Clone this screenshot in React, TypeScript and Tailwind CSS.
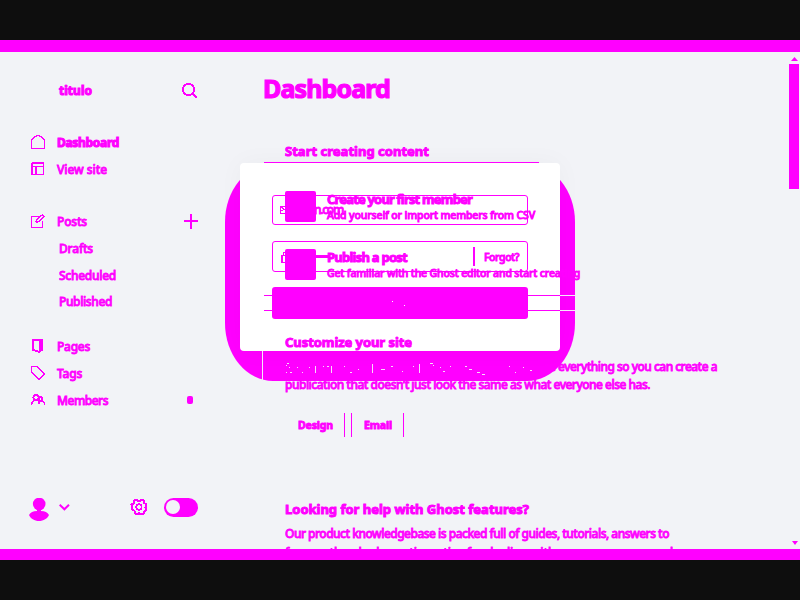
import { useLayoutEffect, useRef, useState } from "react";
import type { ReactNode } from "react";

// A single line of text whose tracking is tuned to fill a given width.
function Line({ children, w, className = "" }: { children: string; w: number; className?: string }) {
  const ref = useRef<HTMLSpanElement>(null);
  const [tracking, setTracking] = useState(0);
  useLayoutEffect(() => {
    if (ref.current) {
      const natural = ref.current.getBoundingClientRect().width - tracking * children.length;
      setTracking((w - natural) / children.length);
    }
  }, [children, w]);
  return (
    <span ref={ref} className={`block w-fit shrink-0 whitespace-pre ${className}`} style={{ letterSpacing: `${tracking}px` }}>
      {children}
    </span>
  );
}

const body = "text-[12px] leading-[18px] font-medium [-webkit-text-stroke:0.8px_#f0f]";
const bodyBold = "text-[12px] leading-[18px] font-bold [-webkit-text-stroke:1.1px_#f0f]";
const small = "text-[10.5px] leading-[14px] font-medium [-webkit-text-stroke:0.9px_#f0f]";
const smallBold = "text-[10.5px] leading-[14px] font-bold [-webkit-text-stroke:0.9px_#f0f]";
const heading = "text-[13px] leading-[18px] font-bold [-webkit-text-stroke:1px_#f0f]";

function Icon({ children }: { children: ReactNode }) {
  return (
    <svg className="mb-[2px] h-[14px] w-[14px] shrink-0" viewBox="0 0 14 14" fill="none" stroke="currentColor" strokeWidth="1.3" shapeRendering="crispEdges">
      {children}
    </svg>
  );
}

function Row({ icon, label, w, bold = false, end }: { icon: ReactNode; label: string; w: number; bold?: boolean; end?: ReactNode }) {
  return (
    <div className="flex h-[27px] items-center pl-[31px]">
      <Icon>{icon}</Icon>
      <div className="ml-[12px] flex flex-1">
        <Line w={w} className={bold ? bodyBold : body}>{label}</Line>
      </div>
      {end}
    </div>
  );
}

function Sub({ label, w }: { label: string; w: number }) {
  return (
    <div className="flex h-[26.7px] items-center pt-px pl-[59px]">
      <Line w={w} className={body}>{label}</Line>
    </div>
  );
}

function Sidebar() {
  return (
    <aside className="flex w-[262px] shrink-0 flex-col">
      <div className="mt-[27px] flex h-[24px] items-center pl-[59px]">
        <Line w={33} className={bodyBold}>titulo</Line>
        <svg className="ml-[90px] h-[17px] w-[17px]" viewBox="0 0 17 17" fill="none" stroke="currentColor" strokeWidth="2" shapeRendering="crispEdges">
          <circle cx="6.500" cy="6.500" r="5.700" />
          <path d="m10.500 10.500 4.500 4.500" />
        </svg>
      </div>
      <nav className="mt-[26px] flex flex-col">
        <Row icon={<path d="M.5 13.500V5L4 1.600 7 .5l3 1.100L13.500 5v8.500z" />} label="Dashboard" w={62} bold />
        <Row icon={<><rect x="1" y="1" width="11.500" height="11.500" rx="1" strokeWidth="1.800" /><path d="M1 4.500h12M5 4.500V13" strokeWidth="1.800" /></>} label="View site" w={50} />
        <div className="h-[25px]" />
        <Row
          icon={<path d="M8 2.500H.8v10.700h10.400V7M5 8l1-2.500L11.500.6l1.700 1.700L7.700 7.700 5 8.500" />}
          label="Posts"
          w={30}
          end={
            <svg className="mr-[63px] h-[15px] w-[15px]" viewBox="0 0 15 15" fill="currentColor" shapeRendering="crispEdges">
              <path d="M6 0h2v15H6z" />
              <path d="M0 6h14v2H0z" />
            </svg>
          }
        />
        <Sub label="Drafts" w={34} />
        <Sub label="Scheduled" w={57} />
        <Sub label="Published" w={53} />
        <div className="h-[18px]" />
        <Row
          icon={<path d="M2 1h9v10L8 13 6 12 2 11z M8.500 1v11M10.200 1v11" strokeWidth="1.900" />}
          label="Pages"
          w={33}
        />
        <Row icon={<path d="M.7.7h5.800l7 7-5.400 5.500-7.400-7z" />} label="Tags" w={25} />
        <Row
          icon={<><circle cx="5" cy="4.500" r="2.600" strokeWidth="1.900" /><circle cx="9.500" cy="6" r="2" strokeWidth="1.700" /><path d="M.6 12c0-3 2-4.800 4.400-4.800S8 9 8 10M7.500 11c.8-3 2-3 3-3 2 0 3 2 3 4" strokeWidth="1.500" /></>}
          label="Members"
          w={51}
          end={<span className="mr-[69px] mb-[2px] h-[8px] w-[6px] rounded-[2px] bg-[#f0f]" />}
        />
      </nav>
      <div className="mt-[81px] flex h-[26px] items-center pl-[29px]">
        <svg className="mt-[3px] h-[24px] w-[20px]" viewBox="0 0 20 24" fill="currentColor">
          <ellipse cx="10.200" cy="6" rx="6.300" ry="6.300" />
          <path d="M8 12h4v1c4 0 6.500 1.500 8 4-1.500 3.500-5.500 6-10 6s-8.500-2.500-10-6c1.500-2.500 4-4 8-4z" />
        </svg>
        <svg className="mb-px ml-[10px] h-[7px] w-[11px]" viewBox="0 0 11 7" fill="none" stroke="currentColor" strokeWidth="2">
          <path d="m.7.8 4.700 4.500L10 .8" />
        </svg>
        <svg className="mb-[2px] ml-[60px] h-[18px] w-[18px]" viewBox="0 0 18 18" fill="none" stroke="currentColor" strokeWidth="2" shapeRendering="crispEdges">
          <path d="M6 1.500 8 3l2-.2L12 1.500l2 1.200.2 2.300 2 1.500V9l-.8.500.8 3-2.200 1-.5 2.200-2.500.8-1.800-1.500L7 16.200l-2.300-1.200-.2-2.200-2.500-1.300L2.500 9 1.500 6.500l2.500-1L4.200 3z" />
          <circle cx="8.900" cy="9" r="2.800" strokeWidth="1.700" />
        </svg>
        <div className="mb-[2px] ml-[16px] flex h-[19px] w-[34px] items-center rounded-full bg-[#f0f] pl-[2px]">
          <div className="h-[14px] w-[14px] rounded-full bg-[#f3f4f8]" />
        </div>
      </div>
    </aside>
  );
}

function Step({ title, tw, text, w }: { title: string; tw: number; text: string; w: number }) {
  return (
    <div className="flex h-[58px] shrink-0 items-start gap-[11px] pl-[23px]">
      <div className="h-[31px] w-[31px] shrink-0 rounded-[2px] bg-[#f0f]" />
      <div className="-mt-[1px] flex flex-col">
        <Line w={tw} className={heading}>{title}</Line>
        <Line w={w} className={small}>{text}</Line>
      </div>
    </div>
  );
}

function Main() {
  return (
    <main className="flex h-[497px] min-w-0 flex-1 flex-col">
      <Line w={127} className="mt-[18px] ml-px text-[25px] font-bold leading-[36px] [-webkit-text-stroke:1.2px_#f0f]">Dashboard</Line>
      <Line w={144} className={`${heading} mt-[36px] ml-[23px]`}>Start creating content</Line>
      <div className="mt-[2px] ml-[2px] h-px w-[275px] shrink-0 bg-[#f0f]" />
      <div className="mt-[28px] flex h-[104px] shrink-0 flex-col">
        <Step title="Create your first member" tw={145} text="Add yourself or import members from CSV" w={208} />
        <Step title="Publish a post" tw={80} text="Get familiar with the Ghost editor and start creating" w={253} />
      </div>
      {/* Divider pair below the step list */}
      <div className="ml-[2px] flex h-[16px] w-[311px] shrink-0 flex-col justify-between">
        <div className="flex h-px"><i className="w-[296px] bg-[#f0f]" /><i className="flex-1 bg-[#f5e8fa]" /></div>
        <div className="flex h-px"><i className="w-[296px] bg-[#f0f]" /><i className="flex-1 bg-[#f5e8fa]" /></div>
      </div>
      <Line w={127} className={`${heading} mt-[22px] ml-[23px]`}>Customize your site</Line>
      <div className="mt-[7px] ml-[23px] flex shrink-0 flex-col">
        <Line w={432} className={body}>Stand out from the crowd. Ghost lets you customize everything so you can create a</Line>
        <Line w={365} className={body}>publication that doesn’t just look the same as what everyone else has.</Line>
      </div>
      <div className="mt-[19px] ml-[23px] flex h-[24px] shrink-0 gap-[6px]">
        <div className="flex w-[60px] items-center border-r border-[#f0f] pl-[13px]">
          <Line w={35} className={smallBold}>Design</Line>
        </div>
        <div className="flex w-[53px] items-center border-x border-[#f0f] pl-[12px]">
          <Line w={28} className={smallBold}>Email</Line>
        </div>
      </div>
      <Line w={244} className={`${heading} mt-[63px] ml-[23px]`}>Looking for help with Ghost features?</Line>
      <div className="mt-[7px] ml-[23px] flex shrink-0 flex-col gap-px">
        <Line w={384} className={body}>Our product knowledgebase is packed full of guides, tutorials, answers to</Line>
        <Line w={388} className={body}>frequently asked questions, tips for dealing with common errors, and</Line>
      </div>
    </main>
  );
}

// Sign-in dialog floating beneath the dashboard lettering, with its heavy drop shadow.
function Dialog() {
  return (
    <>
      <div className="absolute top-[112px] left-[225px] h-[217px] w-[350px] rounded-[48px/58px] bg-[#f0f]" />
      <div className="absolute top-[111px] left-[222px] h-[9px] w-[356px] bg-[#f2f3f7]" />
      <div className="absolute top-[111px] left-[240px] flex h-[188px] w-[320px] flex-col rounded-[4px] bg-white px-[32px] pt-[32px] shadow-[0_0_26px_rgba(30,50,70,0.035)]">
        <div className="flex h-[30px] shrink-0 items-center rounded-[3px] border border-[#f0f] pl-[7px]">
          <svg className="h-[8px] w-[10px]" viewBox="0 0 10 8" fill="none" stroke="currentColor" shapeRendering="crispEdges">
            <path d="M.5.5h9v7h-9zM1 1l4 3 4-3M1 4h2" />
          </svg>
          <Line w={53} className={body}>admin.com</Line>
        </div>
        <div className="mt-[16px] flex h-[31px] shrink-0 items-center rounded-[3px] border border-[#f0f] pl-[8px]">
          <svg className="mt-px h-[12px] w-[9px]" viewBox="0 0 9 12" fill="none" stroke="currentColor" shapeRendering="crispEdges">
            <path d="M.5 4.500h8v7h-8zM2.500 4V1.500h4V4M1.500 4v7" />
          </svg>
          <div className="ml-[5px] h-[3px] w-[34px] bg-[#f0f]" />
          <div className="ml-[144px] h-[19px] w-[2px] bg-[#f0f]" />
          <Line w={35} className={`${small} ml-[9px]`}>Forgot?</Line>
        </div>
        <div className="mt-[15px] h-[32px] shrink-0 rounded-[3px] bg-[#f0f] pt-[14px] pl-[120px]">
          <div className="h-px w-px bg-white" />
          <div className="mt-[3px] ml-[12px] h-px w-px bg-white" />
        </div>
      </div>
      <div className="absolute top-[299px] left-[262px] h-[30px] w-px bg-[#f3e8fb]" />
      {/* Specks where the lettering crosses the shadow */}
      <svg className="absolute top-[308px] left-[285px] z-10 h-[16px] w-[260px]" viewBox="0 0 260 16" stroke="#f6dcfa" strokeWidth="1" shapeRendering="crispEdges">
        <path d="M2 3.500h2M1 5.500h1M4 7.500h1M1 12.500h1M5 12.500h2M12 7.500h1M17 12.500h1M24 7.500h1M38 6.500h1M42 6.500h2M59 6.500h1M65 12.500h2M73 9.500h1M96 9.500h4M106 6.500h2M117 11.500h1M128 6.500h1M145 3.500h3M148 5.500h1M155 7.500h1M158 11.500h2M165 6.500h1M180 6.500h2M184 9.500h3M192 12.500h3M197 14.500h3M224 6.500h1M230 12.500h1M238 7.500h1M245 10.500h2M30.500 6v7M46.500 6v7M87.500 4v9M134.500 4v9" fill="none" />
      </svg>
    </>
  );
}

function Scrollbar() {
  return (
    <div className="flex h-[497px] w-[11px] shrink-0 flex-col items-center pt-[5px]">
      <svg className="h-[4px] w-[7px] shrink-0" viewBox="0 0 7 4" fill="currentColor"><path d="m0 4 3.500-4L7 4z" /></svg>
      <div className="mt-[3px] h-[125px] w-[10px] shrink-0 self-start bg-[#f0f]" />
      <svg className="mt-[352px] h-[4px] w-[6px] shrink-0" viewBox="0 0 6 4" fill="currentColor"><path d="M0 0h6L3 4z" /></svg>
    </div>
  );
}

export default function App() {
  return (
    <div className="flex h-[600px] w-[800px] flex-col overflow-hidden bg-[#0e0e0e] pt-[40px] font-['Noto_Sans','Open_Sans',sans-serif] text-[#f0f]">
      <div className="h-[12px] shrink-0 bg-[#f0f]" />
      <div className="relative h-[497px] shrink-0 overflow-hidden bg-[#f2f3f7]">
        <Dialog />
        <div className="relative flex h-[497px] overflow-hidden">
          <Sidebar />
          <Main />
          <Scrollbar />
        </div>
      </div>
      <div className="h-[11px] shrink-0 bg-[#f0f]" />
    </div>
  );
}
